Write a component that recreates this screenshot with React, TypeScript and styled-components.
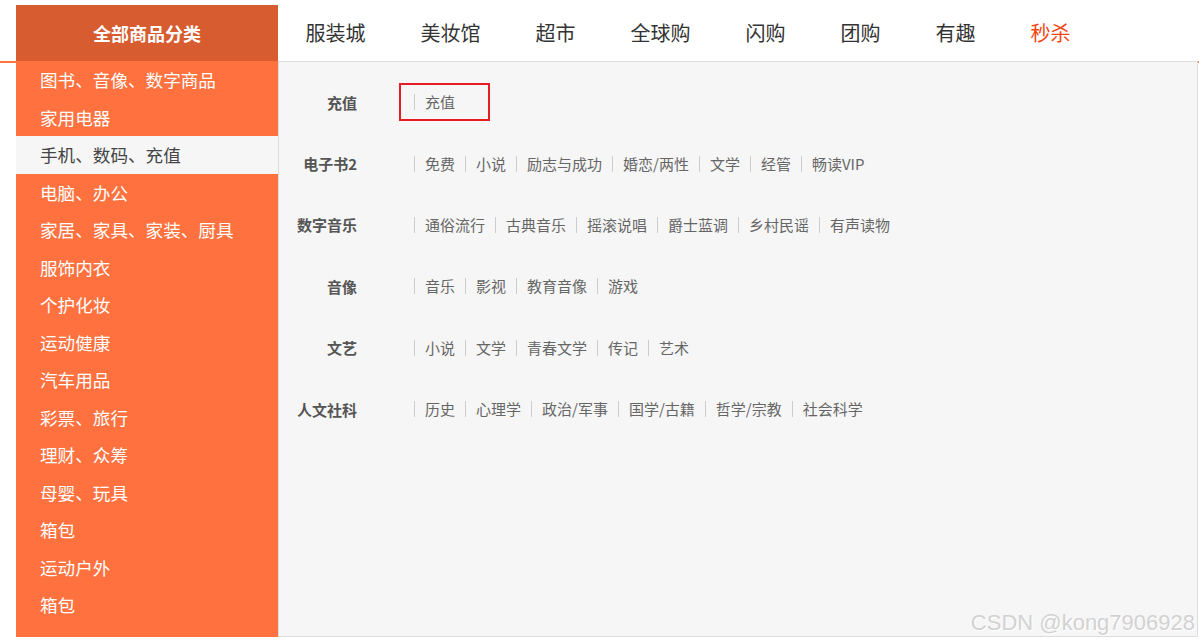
import styled, { createGlobalStyle } from 'styled-components'

const categories = [
  '图书、音像、数字商品',
  '家用电器',
  '手机、数码、充值',
  '电脑、办公',
  '家居、家具、家装、厨具',
  '服饰内衣',
  '个护化妆',
  '运动健康',
  '汽车用品',
  '彩票、旅行',
  '理财、众筹',
  '母婴、玩具',
  '箱包',
  '运动户外',
  '箱包',
]

const navItems = ['服装城', '美妆馆', '超市', '全球购', '闪购', '团购', '有趣', '秒杀']

const groups: { title: string; links: string[] }[] = [
  { title: '充值', links: ['充值'] },
  {
    title: '电子书2',
    links: ['免费', '小说', '励志与成功', '婚恋/两性', '文学', '经管', '畅读VIP'],
  },
  {
    title: '数字音乐',
    links: ['通俗流行', '古典音乐', '摇滚说唱', '爵士蓝调', '乡村民谣', '有声读物'],
  },
  { title: '音像', links: ['音乐', '影视', '教育音像', '游戏'] },
  { title: '文艺', links: ['小说', '文学', '青春文学', '传记', '艺术'] },
  {
    title: '人文社科',
    links: ['历史', '心理学', '政治/军事', '国学/古籍', '哲学/宗教', '社会科学'],
  },
]

export default function App() {
  return (
    <>
      <GlobalStyle />
      <Page>
        <Header>
          <AllTitle>全部商品分类</AllTitle>
          <Nav>
            {navItems.map((n) => (
              <NavItem key={n} $hot={n === '秒杀'}>
                {n}
              </NavItem>
            ))}
          </Nav>
        </Header>
        <Body>
          <Sidebar>
            {categories.map((c, i) => (
              <SideItem key={i} $active={i === 2}>
                {c}
              </SideItem>
            ))}
          </Sidebar>
          <Panel>
            {groups.map((g) => (
              <Row key={g.title}>
                <Label>{g.title}</Label>
                <Links>
                  {g.links.map((l, i) => (
                    <LinkItem key={i} $marked={g.title === '充值' && i === 0}>
                      {l}
                    </LinkItem>
                  ))}
                </Links>
              </Row>
            ))}
          </Panel>
        </Body>
        <Watermark>CSDN @kong7906928</Watermark>
      </Page>
    </>
  )
}

const GlobalStyle = createGlobalStyle`
  body {
    margin: 0;
    background: #fff;
    font-family: "Noto Sans CJK SC", "Noto Sans", sans-serif;
  }
`

const Page = styled.div`
  position: relative;
  width: 1199px;
  height: 642px;
  padding-top: 5px;
  box-sizing: border-box;
`

const Header = styled.div`
  display: flex;
  height: 56px;
  padding-left: 16px;
  border-bottom: 2px solid #ff7240;
`

const AllTitle = styled.div`
  width: 262px;
  background: #d75c30;
  color: #fff;
  font-size: 18px;
  font-weight: bold;
  display: flex;
  align-items: center;
  justify-content: center;
`

const Nav = styled.ul`
  display: flex;
  list-style: none;
  margin: 0;
  padding: 0;
`

const NavItem = styled.li<{ $hot?: boolean }>`
  padding: 0 27.5px;
  line-height: 56px;
  font-size: 20px;
  color: ${(p) => (p.$hot ? '#f4440f' : '#333')};
`

const Body = styled.div`
  display: flex;
  margin-top: -2px;
  padding-left: 16px;
`

const Sidebar = styled.ul`
  width: 262px;
  height: 576px;
  margin: 0;
  padding: 0;
  list-style: none;
  background: #ff7240;
`

const SideItem = styled.li<{ $active?: boolean }>`
  height: 37.5px;
  line-height: 37.5px;
  padding-left: 24px;
  font-size: 17.6px;
  color: ${(p) => (p.$active ? '#444' : '#fff')};
  background: ${(p) => (p.$active ? '#f6f6f6' : 'transparent')};
`

const Panel = styled.div`
  width: 920px;
  height: 576px;
  box-sizing: border-box;
  border: 1px solid #ddd;
  background: #f6f6f6;
  padding-top: 9.5px;
`

const Row = styled.div`
  display: flex;
  align-items: center;
  height: 61.4px;
`

const Label = styled.div`
  width: 78px;
  text-align: right;
  font-size: 15px;
  font-weight: bold;
  color: #555;
`

const Links = styled.ul`
  display: flex;
  list-style: none;
  margin: 0 0 0 57px;
  padding: 0;
`

const LinkItem = styled.li<{ $marked?: boolean }>`
  position: relative;
  padding: 0 10px;
  line-height: 16px;
  font-size: 15px;
  color: #666;
  border-left: 1px solid #ccc;

  ${(p) =>
    p.$marked &&
    `
    &::after {
      content: '';
      position: absolute;
      top: -11px;
      bottom: -11px;
      left: -16px;
      right: -25px;
      border: 2px solid #e81c24;
    }
  `}
`

const Watermark = styled.div`
  position: absolute;
  right: 4px;
  bottom: 6px;
  font-family: "Liberation Sans", Arial, sans-serif;
  font-size: 22px;
  color: #d2d2d2;
  text-shadow: 1px 1px 0 #fff;
`
